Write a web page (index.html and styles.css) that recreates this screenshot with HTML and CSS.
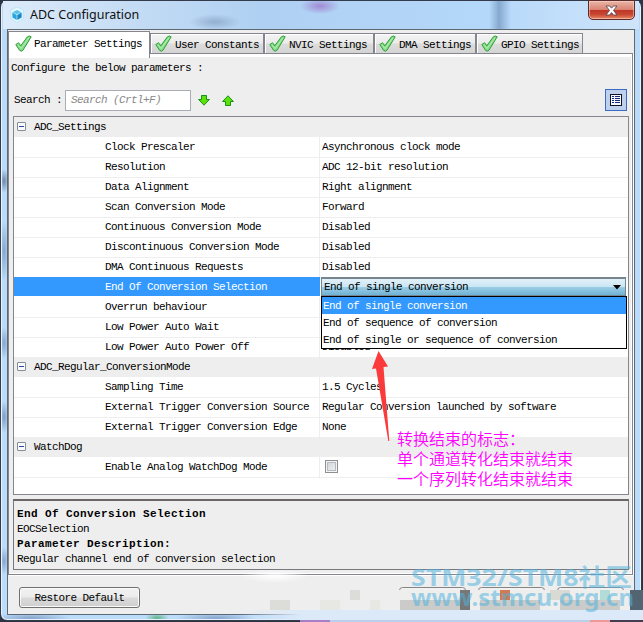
FILE: index.html
```html
<!DOCTYPE html>
<html lang="en">
<head>
    <meta charset="UTF-8">
    <title>ADC Configuration</title>
    <link rel="stylesheet" href="styles.css">
</head>
<body>

<svg class="defs" width="0" height="0">
    <symbol id="check" viewBox="0 0 17 17">
        <path d="M.8 9.6 L3.4 7.8 Q4.4 7.8 5.6 11 L12.4 1.8 Q14.6 .2 16.2 1.8 L8 15.2 Q6.4 16.8 4.8 15.6 Z" fill="#86dd88" stroke="#2f9e3b" stroke-width="1"/>
        <path d="M3 9.6 L6 13.6 L14 2.8" fill="none" stroke="#b4edb0" stroke-width="1"/>
    </symbol>
</svg>

<div class="window">
    <div class="titlebar">
        <svg class="app-icon" width="16" height="16" viewBox="0 0 16 16">
            <path d="M8 0 L14.5 3 L14 12 L8 15.5 L2 12 L1.5 3 Z" fill="#e4f7ff" stroke="#b9e6f8"/>
            <path d="M8 3 L12.3 5.2 L8 7.5 L3.7 5.2 Z" fill="#58c4ee"/>
            <path d="M3.4 5.6 L7.7 8 V13 L3.4 10.6 Z" fill="#2aa5dc"/>
            <path d="M12.6 5.6 L8.3 8 V13 L12.6 10.6 Z" fill="#1b86c4"/>
        </svg>
        <span class="title">ADC Configuration</span>
        <button class="close">
            <svg width="13" height="11" viewBox="0 0 13 11">
                <path d="M1 1 H4.6 L6.5 3.2 L8.4 1 H12 L8.5 5.4 L12 10 H8.4 L6.5 7.6 L4.6 10 H1 L4.5 5.4 Z" fill="#fff" stroke="#5a4a52" stroke-width=".9"/>
            </svg>
        </button>
    </div>

    <div class="client">
        <div class="tabs">
            <div class="tab active"><svg><use href="#check"/></svg>Parameter Settings</div>
            <div class="tab tab-user"><svg><use href="#check"/></svg>User Constants</div>
            <div class="tab tab-nvic"><svg><use href="#check"/></svg>NVIC Settings</div>
            <div class="tab tab-dma"><svg><use href="#check"/></svg>DMA Settings</div>
            <div class="tab tab-gpio"><svg><use href="#check"/></svg>GPIO Settings</div>
        </div>

        <div class="panel">
            <div class="intro">Configure the below parameters :</div>
            <div class="search-row">
                <span class="search-label">Search :</span>
                <div class="search-box">Search (Crtl+F)</div>
                <svg class="arrow" width="12" height="11" viewBox="0 0 12 11">
                    <path d="M3.5 .5 H8.5 V4.5 H11.4 L6 10.2 L.6 4.5 H3.5 Z" fill="#5fdf0c" stroke="#149414"/>
                </svg>
                <svg class="arrow" width="12" height="11" viewBox="0 0 12 11">
                    <path d="M3.5 10.5 H8.5 V6.5 H11.4 L6 .8 L.6 6.5 H3.5 Z" fill="#5fdf0c" stroke="#149414"/>
                </svg>
                <div class="view-button">
                    <svg width="12" height="12" viewBox="0 0 12 12" shape-rendering="crispEdges">
                        <rect x=".5" y=".5" width="11" height="11" fill="#f4f7ff" stroke="#10131c"/>
                        <path d="M2 2.5h2M2 4.5h2M2 6.5h2M2 8.5h2M5 2.5h5M5 4.5h5M5 6.5h5M5 8.5h5" stroke="#1a2a78"/>
                    </svg>
                </div>
            </div>

            <div class="table">
                <div class="group"><i class="toggle"></i>ADC_Settings</div>
                <div class="row"><span>Clock Prescaler</span><span>Asynchronous clock mode</span></div>
                <div class="row"><span>Resolution</span><span>ADC 12-bit resolution</span></div>
                <div class="row"><span>Data Alignment</span><span>Right alignment</span></div>
                <div class="row"><span>Scan Conversion Mode</span><span>Forward</span></div>
                <div class="row"><span>Continuous Conversion Mode</span><span>Disabled</span></div>
                <div class="row"><span>Discontinuous Conversion Mode</span><span>Disabled</span></div>
                <div class="row"><span>DMA Continuous Requests</span><span>Disabled</span></div>
                <div class="row selected">
                    <span>End Of Conversion Selection</span>
                    <div class="combo">
                        End of single conversion
                        <svg width="8" height="5" viewBox="0 0 8 5"><path d="M0 0H8L4 4.6Z"/></svg>
                        <div class="menu">
                            <div class="option current">End of single conversion</div>
                            <div class="option">End of sequence of conversion</div>
                            <div class="option">End of single or sequence of conversion</div>
                        </div>
                    </div>
                </div>
                <div class="row"><span>Overrun behaviour</span><span></span></div>
                <div class="row"><span>Low Power Auto Wait</span><span></span></div>
                <div class="row"><span>Low Power Auto Power Off</span><span>Disabled</span></div>
                <div class="group"><i class="toggle"></i>ADC_Regular_ConversionMode</div>
                <div class="row"><span>Sampling Time</span><span>1.5 Cycles</span></div>
                <div class="row"><span>External Trigger Conversion Source</span><span>Regular Conversion launched by software</span></div>
                <div class="row"><span>External Trigger Conversion Edge</span><span>None</span></div>
                <div class="group"><i class="toggle"></i>WatchDog</div>
                <div class="row"><span>Enable Analog WatchDog Mode</span><span><i class="checkbox"></i></span></div>
            </div>

            <div class="description">
                <b>End Of Conversion Selection</b>
                <p>EOCSelection</p>
                <b>Parameter Description:</b>
                <p>Regular channel end of conversion selection</p>
            </div>
        </div>

        <div class="footer">
            <button class="restore">Restore Default</button>
        </div>
    </div>
</div>

<!-- red pointer and note over the table -->
<svg class="pointer" width="20" height="92" viewBox="0 0 20 92">
    <path d="M7.5 0 L17 15.5 L12.5 16 L18.3 90 H17.3 L5 17.5 L1 18 Z" fill="#fb3b3b"/>
</svg>
<div class="note">
    <div>转换结束的标志：</div>
    <div>单个通道转化结束就结束</div>
    <div>一个序列转化结束就结束</div>
</div>

<!-- pixelated strip with the forum watermark -->
<svg class="mosaic" width="403" height="52" viewBox="0 0 403 52">
    <defs>
        <linearGradient id="fade"><stop offset="0" stop-color="#dbe9f8" stop-opacity="0"/><stop offset=".15" stop-color="#dbe9f8"/></linearGradient>
        <radialGradient id="glow"><stop offset="0" stop-color="#fff"/><stop offset="1" stop-color="#fff" stop-opacity="0"/></radialGradient>
    </defs>
    <ellipse cx="35" cy="6" rx="34" ry="7" fill="url(#glow)"/>
    <rect y="40" width="403" height="10" fill="url(#fade)"/>
    <rect x="60" y="50" width="343" height="2" fill="#b9cfea"/>
    <rect x="60" y="50" width="30" height="2" fill="#a77fc4"/>
    <path d="M30 30h20v10h-20zM110 20h10v10h-10z" fill="#dcddd9"/>
    <path d="M80 30h20v10h-20zM130 30h10v10h-10z" fill="#e7e7e4"/>
    <g fill="#f1f1f1" stroke="#858585">
        <path d="M159.500 22V20.500Q159.500 17.500 162.500 17.500H222.500Q225.500 17.500 225.500 20.500V32"/>
        <path d="M238.500 22V20.500Q238.500 17.500 241.500 17.500H301.500Q304.500 17.500 304.500 20.500V22"/>
        <path d="M317.500 22V20.500Q317.500 17.500 320.500 17.500H380.500Q383.500 17.500 383.500 20.500V22"/>
    </g>
    <path d="M160 30h60v10h-60zM240 30h60v10h-60zM320 30h60v10h-60z" fill="#cbcbc9"/>
    <path d="M158 20h62v10h-62zM238 20h68v10h-68zM317 20h68v10h-68z" fill="#eeeeed"/>
    <rect x="220" y="20" width="10" height="20" fill="#777"/>
    <rect x="260" y="20" width="10" height="10" fill="#cf7b54"/>
    <rect x="310" y="20" width="20" height="10" fill="#d9dad3"/>
    <rect x="360" y="20" width="10" height="10" fill="#b2dcd5"/>
    <rect x="390" y="20" width="13" height="20" fill="#536473"/>
    <rect x="350" y="50" width="20" height="2" fill="#e99"/>
    <rect x="370" y="50" width="33" height="2" fill="#453d52"/>
</svg>
<svg class="watermark" width="232" height="56" viewBox="0 0 232 56">
    <text x="1" y="26" textLength="221" lengthAdjust="spacingAndGlyphs">STM32/STM8社区</text>
    <text x="1" y="46" textLength="223" lengthAdjust="spacingAndGlyphs">www.stmcu.org.cn</text>
</svg>

</body>
</html>
```
FILE: styles.css
```css
* {
    box-sizing: border-box;
}
body {
    margin: 0;
    width: 643px;
    height: 622px;
    overflow: hidden;
    position: relative;
    background: #2c3444;
    font-family: "Liberation Mono", "Noto Sans CJK SC", monospace;
    font-size: 11px;
    letter-spacing: -0.6px;
    color: #000;
}
p {
    margin: 0;
}
.defs {
    position: absolute;
}
.window {
    width: 642px;
    height: 621px;
    padding: 0 6px 6px 6px;
    border: 1px solid #343c4c;
    border-radius: 7px;
    background:
        radial-gradient(ellipse 12px 5px at 156px 617px, #62b487, transparent),
        radial-gradient(ellipse 40px 5px at 215px 617px, #86a5cc, transparent),
        radial-gradient(ellipse 40px 5px at 30px 617px, #86a5cc, transparent),
        radial-gradient(ellipse 5px 12px at 3px 180px, #7089a8, transparent),
        radial-gradient(ellipse 5px 30px at 3px 250px, #86a5cc, transparent),
        radial-gradient(ellipse 5px 16px at 3px 342px, #86a5cc, transparent),
        radial-gradient(ellipse 5px 16px at 3px 416px, #7f9cc2, transparent),
        radial-gradient(ellipse 5px 14px at 3px 560px, #86a5cc, transparent),
        linear-gradient(180deg, #b9d6f3 0, #b9daf9 30px, #bcdcfb 100%);
    box-shadow: inset 0 0 0 1px #e6f3ff;
}

/* title bar */
.titlebar {
    display: flex;
    height: 28px;
    margin: 0 -4px;
    padding-left: 6px;
    background:
        radial-gradient(ellipse 26px 8px at 212px 21px, rgba(95, 120, 155, .4), transparent),
        radial-gradient(ellipse 20px 8px at 317px 5px, rgba(150, 90, 190, .6), transparent),
        linear-gradient(90deg, transparent 486px, rgba(85, 120, 165, .5) 496px, transparent 508px),
        linear-gradient(90deg, #dcebfa 0, #c4dcf4 130px, #afd0f2 260px, #b4d8fa 480px, #cfe4fa 100%);
}
.app-icon {
    margin-top: 6px;
}
.title {
    margin: 5px 0 0 5px;
    font: 12.5px/18px "Noto Sans", sans-serif;
    letter-spacing: 0;
    color: #111;
}
.close {
    display: flex;
    align-items: center;
    justify-content: center;
    width: 47px;
    height: 20px;
    margin: -1px 4px 0 auto;
    padding: 0;
    border: 1px solid #5b2b2c;
    border-radius: 0 0 5px 5px;
    box-shadow: inset 0 0 0 1px rgba(255, 220, 210, .5);
    background: linear-gradient(#e9b5a8 0, #d98471 48%, #bd3527 50%, #c94732 75%, #e78a68 100%);
}

/* client area */
.client {
    height: 586px;
    border: 1px solid #5d6873;
    background: #eee;
}
.tabs {
    display: flex;
    align-items: flex-end;
    height: 23px;
    position: relative;
    z-index: 1;
}
.tab {
    display: flex;
    align-items: center;
    height: 20px;
    padding: 3px 0 0 4px;
    border: 1px solid #85858f;
    border-bottom: 0;
    box-shadow: inset 1px 1px 0 #fff;
    background: linear-gradient(#f3f3f3 0, #ebebeb 48%, #dcdcdc 52%, #d4d4d4 100%);
    white-space: nowrap;
}
.tab svg {
    flex: none;
    width: 17px;
    height: 17px;
    margin: -3px 3px 0 0;
}
.tab.active {
    width: 142px;
    height: 27px;
    margin-bottom: -5px;
    padding: 0 0 3px 6px;
    background: #fff;
}
.tab.active svg {
    margin: 0 2px 0 0;
}
.tab-user {
    width: 114px;
}
.tab-nvic {
    width: 110px;
}
.tab-dma {
    width: 102px;
}
.tab-gpio {
    width: 107px;
}
.panel {
    width: 625px;
    height: 522px;
    padding: 4px 3px 0 4px;
    border: 1px solid #85858f;
    box-shadow: inset 0 3px 0 #fff, inset -1px -1px 0 #fff, 1px 1px 0 #fff;
}
.intro {
    height: 20px;
    margin-left: -2px;
    line-height: 20px;
}
.search-row {
    display: flex;
    align-items: center;
    height: 38px;
    padding: 6px 2px 0 1px;
}
.search-label {
    width: 51px;
}
.search-box {
    width: 126px;
    height: 21px;
    margin-right: 7px;
    padding-left: 5px;
    border: 1px solid #a9acb4;
    background: #fff;
    color: #888;
    font-style: italic;
    line-height: 19px;
}
.arrow {
    margin-right: 12px;
}
.view-button {
    display: flex;
    align-items: center;
    justify-content: center;
    width: 22px;
    height: 22px;
    margin-left: auto;
    border: 1px solid #3a6bc5;
    background: #bfd0ee;
}

/* parameter table */
.table {
    width: 616px;
    height: 379px;
    border: 1px solid #85858f;
    background: #fff;
}
.group {
    display: flex;
    align-items: center;
    height: 20px;
    padding-left: 3px;
    background: #eee;
}
.toggle {
    display: flex;
    align-items: center;
    justify-content: center;
    width: 9px;
    height: 9px;
    margin: -1px 8px 0 0;
    border: 1px solid #848c96;
    border-radius: 1px;
    background: #fbfbfb;
}
.toggle::before {
    content: "";
    width: 5px;
    height: 1px;
    background: #2b47a8;
}
.row {
    display: grid;
    grid-template-columns: 306px 1fr;
    height: 20px;
    line-height: 20px;
    white-space: nowrap;
}
.row > span {
    border-bottom: 1px solid #eee;
}
.row > span:first-child {
    padding-left: 91px;
    border-right: 1px solid #eee;
}
.row > span:last-child {
    padding-left: 2px;
}
.row.selected > span {
    height: 19px;
    border-color: #3399ff;
    background: #3399ff;
    color: #fff;
}
.checkbox {
    display: block;
    width: 13px;
    height: 13px;
    margin: 3px 0 0 3px;
    border: 1px solid #8e8f8f;
    box-shadow: inset 0 0 0 1px #f4f4f4, inset 0 0 0 2px #b5bac0;
    background: linear-gradient(135deg, #cbcfd5, #f6f6f6);
}
.combo {
    position: relative;
    display: flex;
    align-items: center;
    justify-content: space-between;
    width: 305px;
    height: 19px;
    margin-left: 1px;
    padding: 0 4px 0 2px;
    border: 1px solid #77858f;
    border-top-width: 2px;
    background: linear-gradient(#e3f1f8 0, #c9e6f4 48%, #9ccde4 52%, #6eb3d6 100%);
    line-height: 16px;
}
.menu {
    position: absolute;
    top: 17px;
    left: -1px;
    width: 306px;
    border: 1px solid #000;
    background: #fff;
}
.option {
    height: 17px;
    padding-left: 1px;
    line-height: 19px;
}
.option.current {
    background: #3399ff;
    color: #fff;
}

/* description */
.description {
    width: 616px;
    height: 71px;
    margin-top: 4px;
    padding: 6px 3px;
    border: 1px solid #77777c;
    border-top: 2px solid #6b6666;
    line-height: 15px;
}
.description b {
    display: block;
    letter-spacing: 0.4px;
}
.footer {
    padding: 12px 0 0 11px;
}
.restore {
    width: 121px;
    height: 21px;
    padding: 1px 0 0;
    border: 1px solid #707070;
    border-radius: 3px;
    box-shadow: inset 0 0 0 1px #fafafa;
    background: linear-gradient(#f2f2f2 0, #ebebeb 48%, #dadada 52%, #cfcfcf 100%);
    font: inherit;
    letter-spacing: inherit;
}

/* overlays */
.pointer {
    position: absolute;
    left: 371px;
    top: 351px;
}
.note {
    position: absolute;
    left: 397px;
    top: 428px;
    font: 350 16px/20px "Noto Sans CJK SC", sans-serif;
    letter-spacing: 0;
    color: #f0f;
}
.mosaic {
    position: absolute;
    left: 240px;
    top: 570px;
}
.watermark {
    position: absolute;
    left: 410px;
    top: 560px;
    font: bold 24px "Noto Sans", "Noto Sans CJK SC", sans-serif;
    letter-spacing: 0;
    fill: rgba(80, 178, 222, .55);
}
```
